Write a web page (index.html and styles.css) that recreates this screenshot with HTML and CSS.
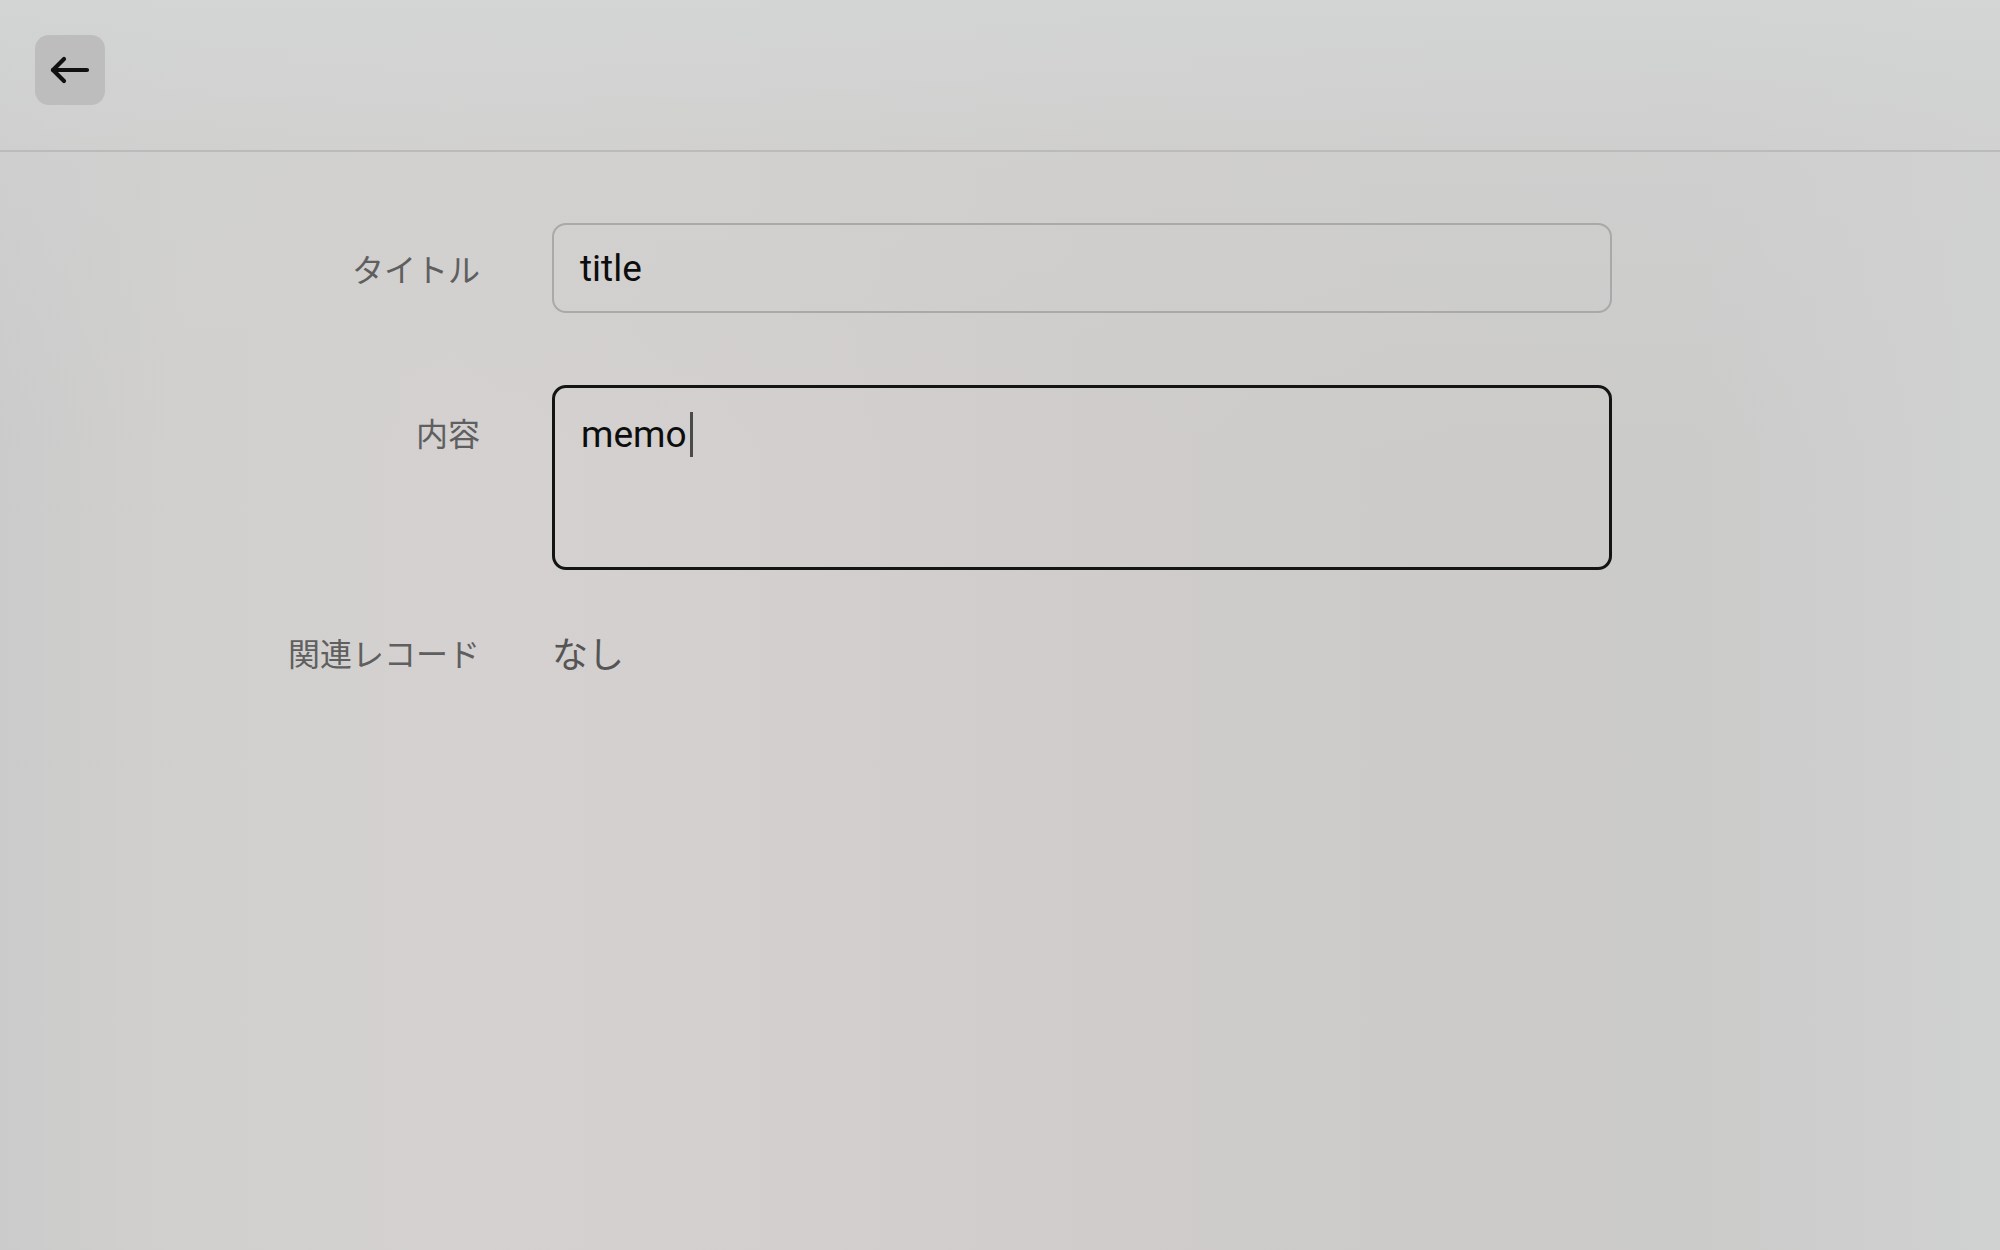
FILE: index.html
```html
<!DOCTYPE html>
<html lang="ja">
<head>
<meta charset="utf-8">
<title>メモ編集</title>
<link rel="stylesheet" href="styles.css">
</head>
<body>
<header class="topbar">
  <button class="back-btn" aria-label="戻る">
    <svg width="70" height="70" viewBox="0 0 70 70" fill="none" stroke="#111" stroke-width="4.2" stroke-linecap="round" stroke-linejoin="round">
      <path d="M18 35 H52"/>
      <path d="M29 24 L18 35 L29 46"/>
    </svg>
  </button>
</header>
<main class="form">
  <div class="field field-title">
    <label class="label">タイトル</label>
    <div class="input">title</div>
  </div>
  <div class="field field-memo">
    <label class="label">内容</label>
    <div class="textarea focused">memo<span class="caret"></span></div>
  </div>
  <div class="field field-related">
    <span class="label">関連レコード</span>
    <span class="value">なし</span>
  </div>
</main>
</body>
</html>
```
FILE: styles.css
```css
html, body {
  margin: 0;
  padding: 0;
  height: 100%;
}
body {
  width: 2000px;
  height: 1250px;
  overflow: hidden;
  font-family: "Noto Sans CJK JP", "Noto Sans", sans-serif;
  background:
    linear-gradient(180deg, rgba(211,214,213,0.9) 0px, rgba(208,209,208,0.6) 150px, rgba(210,208,207,0) 450px),
    linear-gradient(90deg, #cbcbcb 0px, #d1d0ce 180px, #d4d1d0 450px, #d2cfce 800px, #cfcccb 1100px, #cccbca 1450px, #cbcbca 1700px, #d0d1d1 2000px);
}
.topbar {
  box-sizing: border-box;
  height: 152px;
  border-bottom: 2px solid #bbbbbb;
  padding: 35px;
}
.back-btn {
  width: 70px;
  height: 70px;
  padding: 0;
  border: none;
  border-radius: 14px;
  background: #bdbdbd;
  display: flex;
  align-items: center;
  justify-content: center;
  cursor: pointer;
}
.back-btn svg {
  display: block;
}
.form {
  display: flex;
  flex-direction: column;
  padding-top: 71px;
}
.field {
  display: grid;
  grid-template-columns: 480px 1060px;
  column-gap: 72px;
}
.field-title {
  align-items: center;
}
.field-memo {
  margin-top: 72px;
  align-items: start;
}
.field-related {
  margin-top: 60px;
  align-items: center;
}
.label {
  justify-self: end;
  font-size: 32px;
  color: #5f5f5f;
  line-height: 44px;
}
.field-memo .label {
  padding-top: 25px;
}
.input,
.textarea {
  box-sizing: border-box;
  border-radius: 14px;
  font-family: Roboto, "Noto Sans CJK JP", sans-serif;
  font-size: 37px;
  color: #0d0d0d;
}
.input {
  height: 90px;
  border: 2px solid #a9a9a9;
  padding: 0 26px;
  display: flex;
  align-items: center;
}
.textarea {
  height: 185px;
  border: 3px solid #141414;
  padding: 25px 26px;
  line-height: 44px;
}
.caret {
  display: inline-block;
  width: 3px;
  height: 45px;
  background: #4a4a4a;
  vertical-align: middle;
  margin-left: 3px;
  position: relative;
  top: -3px;
}
.value {
  font-size: 36px;
  color: #555;
  line-height: 44px;
}
```
